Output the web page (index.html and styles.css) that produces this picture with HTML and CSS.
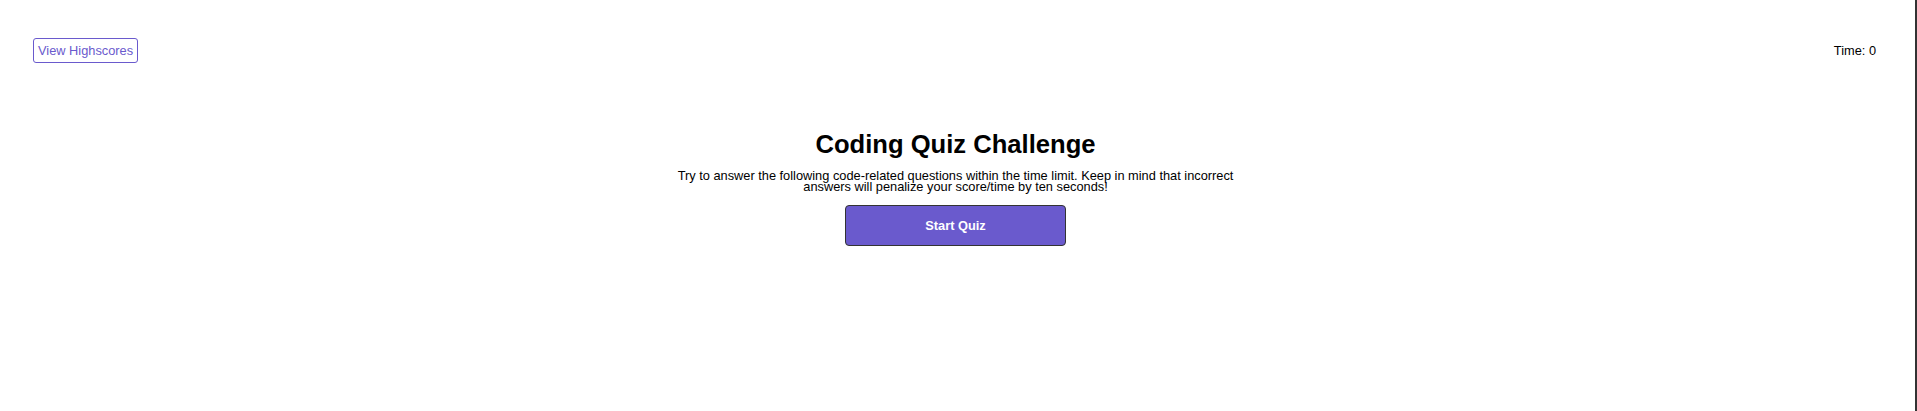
FILE: index.html
```html
<!DOCTYPE html>
<html lang="en">
<head>
<meta charset="utf-8">
<title>Coding Quiz Challenge</title>
<link rel="stylesheet" href="styles.css">
</head>
<body>
<div class="frame">
  <header class="topbar">
    <button class="highscores-btn" type="button">View Highscores</button>
    <div class="timer">Time: <span class="timer-value">0</span></div>
  </header>
  <main class="intro">
    <h1 class="intro-title">Coding Quiz Challenge</h1>
    <p class="intro-text">Try to answer the following code-related questions within the time limit. Keep in mind that incorrect answers will penalize your score/time by ten seconds!</p>
    <button class="start-btn" type="button">Start Quiz</button>
  </main>
</div>
</body>
</html>
```

FILE: styles.css
```css
html, body {
  margin: 0;
  padding: 0;
  background: #ffffff;
}

body {
  font-family: "Liberation Sans", Arial, sans-serif;
  font-size: 12.8px;
  color: #000000;
}

.frame {
  box-sizing: border-box;
  height: 100vh;
  border-right: 2px solid #333333;
  display: flex;
  flex-direction: column;
}

.topbar {
  display: flex;
  justify-content: space-between;
  align-items: center;
  padding: 38px 39px 0 33px;
}

.highscores-btn {
  box-sizing: border-box;
  height: 25px;
  padding: 0 4px;
  background: #ffffff;
  border: 1px solid #6a5acd;
  border-radius: 3px;
  color: #6a5acd;
  font-family: inherit;
  font-size: 12.8px;
  cursor: pointer;
}

.timer {
  font-size: 12.8px;
}

.intro {
  display: flex;
  flex-direction: column;
  align-items: center;
  padding: 67px 4px 0 0;
}

.intro-title {
  margin: 0;
  font-size: 25.6px;
  font-weight: bold;
  line-height: 29.4px;
}

.intro-text {
  margin: 10.5px 0 0;
  width: 570px;
  text-align: center;
  font-size: 12.8px;
  line-height: 11px;
}

.start-btn {
  box-sizing: border-box;
  margin-top: 13.5px;
  width: 221px;
  height: 41px;
  background: #6a5acd;
  border: 1px solid #333333;
  border-radius: 4px;
  color: #ffffff;
  font-family: inherit;
  font-size: 12.8px;
  font-weight: bold;
  cursor: pointer;
}
```
